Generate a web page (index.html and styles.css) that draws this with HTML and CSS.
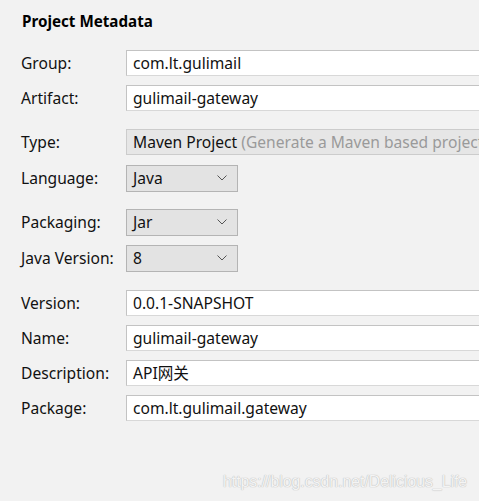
FILE: index.html
```html
<!DOCTYPE html>
<html>
<head>
<meta charset="utf-8">
<link rel="stylesheet" href="styles.css">
</head>
<body>
<div class="panel">
  <h1 class="title">Project Metadata</h1>
  <div class="group">
    <div class="row"><span class="label">Group:</span><div class="field text">com.lt.gulimail</div></div>
    <div class="row"><span class="label">Artifact:</span><div class="field text">gulimail-gateway</div></div>
  </div>
  <div class="group tight">
    <div class="row"><span class="label">Type:</span><div class="field readonly">Maven Project <span class="hint">(Generate a Maven based project</span></div></div>
    <div class="row"><span class="label">Language:</span><div class="field combo">Java<svg class="chev" width="10" height="6" viewBox="0 0 10 6"><path d="M0.5 0.5 L5 5 L9.5 0.5" fill="none" stroke="#555" stroke-width="1"/></svg></div></div>
  </div>
  <div class="group tight">
    <div class="row"><span class="label">Packaging:</span><div class="field combo">Jar<svg class="chev" width="10" height="6" viewBox="0 0 10 6"><path d="M0.5 0.5 L5 5 L9.5 0.5" fill="none" stroke="#555" stroke-width="1"/></svg></div></div>
    <div class="row"><span class="label">Java Version:</span><div class="field combo">8<svg class="chev" width="10" height="6" viewBox="0 0 10 6"><path d="M0.5 0.5 L5 5 L9.5 0.5" fill="none" stroke="#555" stroke-width="1"/></svg></div></div>
  </div>
  <div class="group">
    <div class="row"><span class="label">Version:</span><div class="field text">0.0.1-SNAPSHOT</div></div>
    <div class="row"><span class="label">Name:</span><div class="field text">gulimail-gateway</div></div>
    <div class="row"><span class="label">Description:</span><div class="field text">API网关</div></div>
    <div class="row"><span class="label">Package:</span><div class="field text">com.lt.gulimail.gateway</div></div>
  </div>
</div>
<div class="watermark">https://blog.csdn.net/Delicious_Life</div>
</body>
</html>
```
FILE: styles.css
```css
html, body {
  margin: 0;
  padding: 0;
}
body {
  width: 479px;
  height: 501px;
  overflow: hidden;
  background: #f2f2f2;
  font-family: "Noto Sans", "Noto Sans CJK SC", sans-serif;
  font-size: 15.6px;
  color: #111;
  position: relative;
}
.panel {
  padding: 11px 0 0 21px;
}
.title {
  margin: 0 0 0 1px;
  font-size: 15.2px;
  font-weight: bold;
  line-height: 20px;
  color: #000;
}
.group {
  display: flex;
  flex-direction: column;
  gap: 9px;
  margin-top: 19px;
}
.group.tight {
  gap: 10px;
  margin-top: 18px;
}
.group:last-child {
  margin-top: 19px;
}
.row {
  display: flex;
  align-items: center;
  height: 26px;
}
.label {
  width: 105px;
  flex: none;
  line-height: 26px;
}
.field {
  box-sizing: border-box;
  height: 26px;
  line-height: 24px;
  padding: 0 6px;
  border: 1px solid #c6c6c6;
  white-space: nowrap;
  overflow: hidden;
  flex: none;
}
.text {
  width: 354px;
  background: #fff;
  border-color: #c3c3c3 #d8d8d8 #d8d8d8 #c3c3c3;
  border-right: none;
}
.readonly {
  width: 354px;
  background: #e6e6e6;
  border-color: #cccccc;
  border-right: none;
}
.hint {
  color: #9a9a9a;
}
.combo {
  width: 112px;
  height: 27px;
  background: #e3e3e3;
  border-color: #b4b4b4;
  display: flex;
  align-items: center;
  justify-content: space-between;
  padding-right: 10px;
}
.chev {
  display: block;
}
.watermark {
  position: absolute;
  left: 223px;
  top: 473px;
  font-family: "Liberation Sans", Arial, sans-serif;
  font-size: 15.8px;
  color: #f4f4f4;
  text-shadow: 0 0 1px #bdbdbd, 0 0 1px #bdbdbd;
  white-space: nowrap;
}
```
